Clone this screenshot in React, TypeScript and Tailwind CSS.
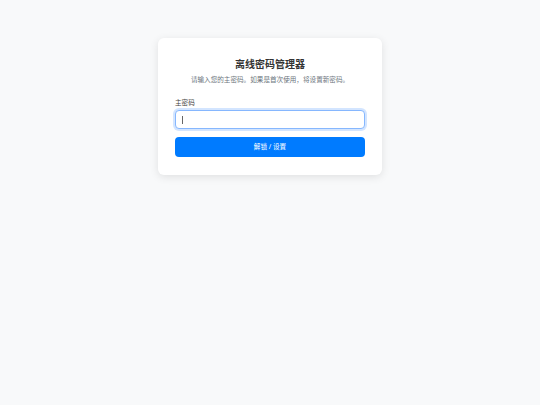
const font = { fontFamily: '"Noto Sans", "Noto Sans CJK SC", sans-serif' };

export default function App() {
  return (
    <div className="min-h-[405px] w-full bg-[#f8f9fa] pt-[38px]" style={font}>
      <div className="mx-auto w-[224px] rounded-[6px] bg-white px-[17px] pb-[18px] pt-[19px] shadow-[0_2px_8px_rgba(0,0,0,0.1)]">
        <h1 className="text-center text-[10px] font-bold leading-[14px] text-[#333]">离线密码管理器</h1>
        <p className="mt-[4px] text-center text-[6.6px] leading-[10px] text-[#6c757d]">
          请输入您的主密码。如果是首次使用，将设置新密码。
        </p>
        <label className="mt-[13px] block text-[6.6px] leading-[10px] text-[#444]">主密码</label>
        <div className="mt-[2px] flex h-[19px] items-center rounded-[4px] border border-[#86b7fe] bg-white px-[6px] shadow-[0_0_0_2px_rgba(13,110,253,0.18)]">
          <span className="h-[8px] w-px bg-[#666]" />
        </div>
        <button className="mt-[8px] flex h-[20px] w-full items-center justify-center rounded-[4px] bg-[#007bff] text-[6.6px] text-white">
          解锁 / 设置
        </button>
      </div>
    </div>
  );
}
